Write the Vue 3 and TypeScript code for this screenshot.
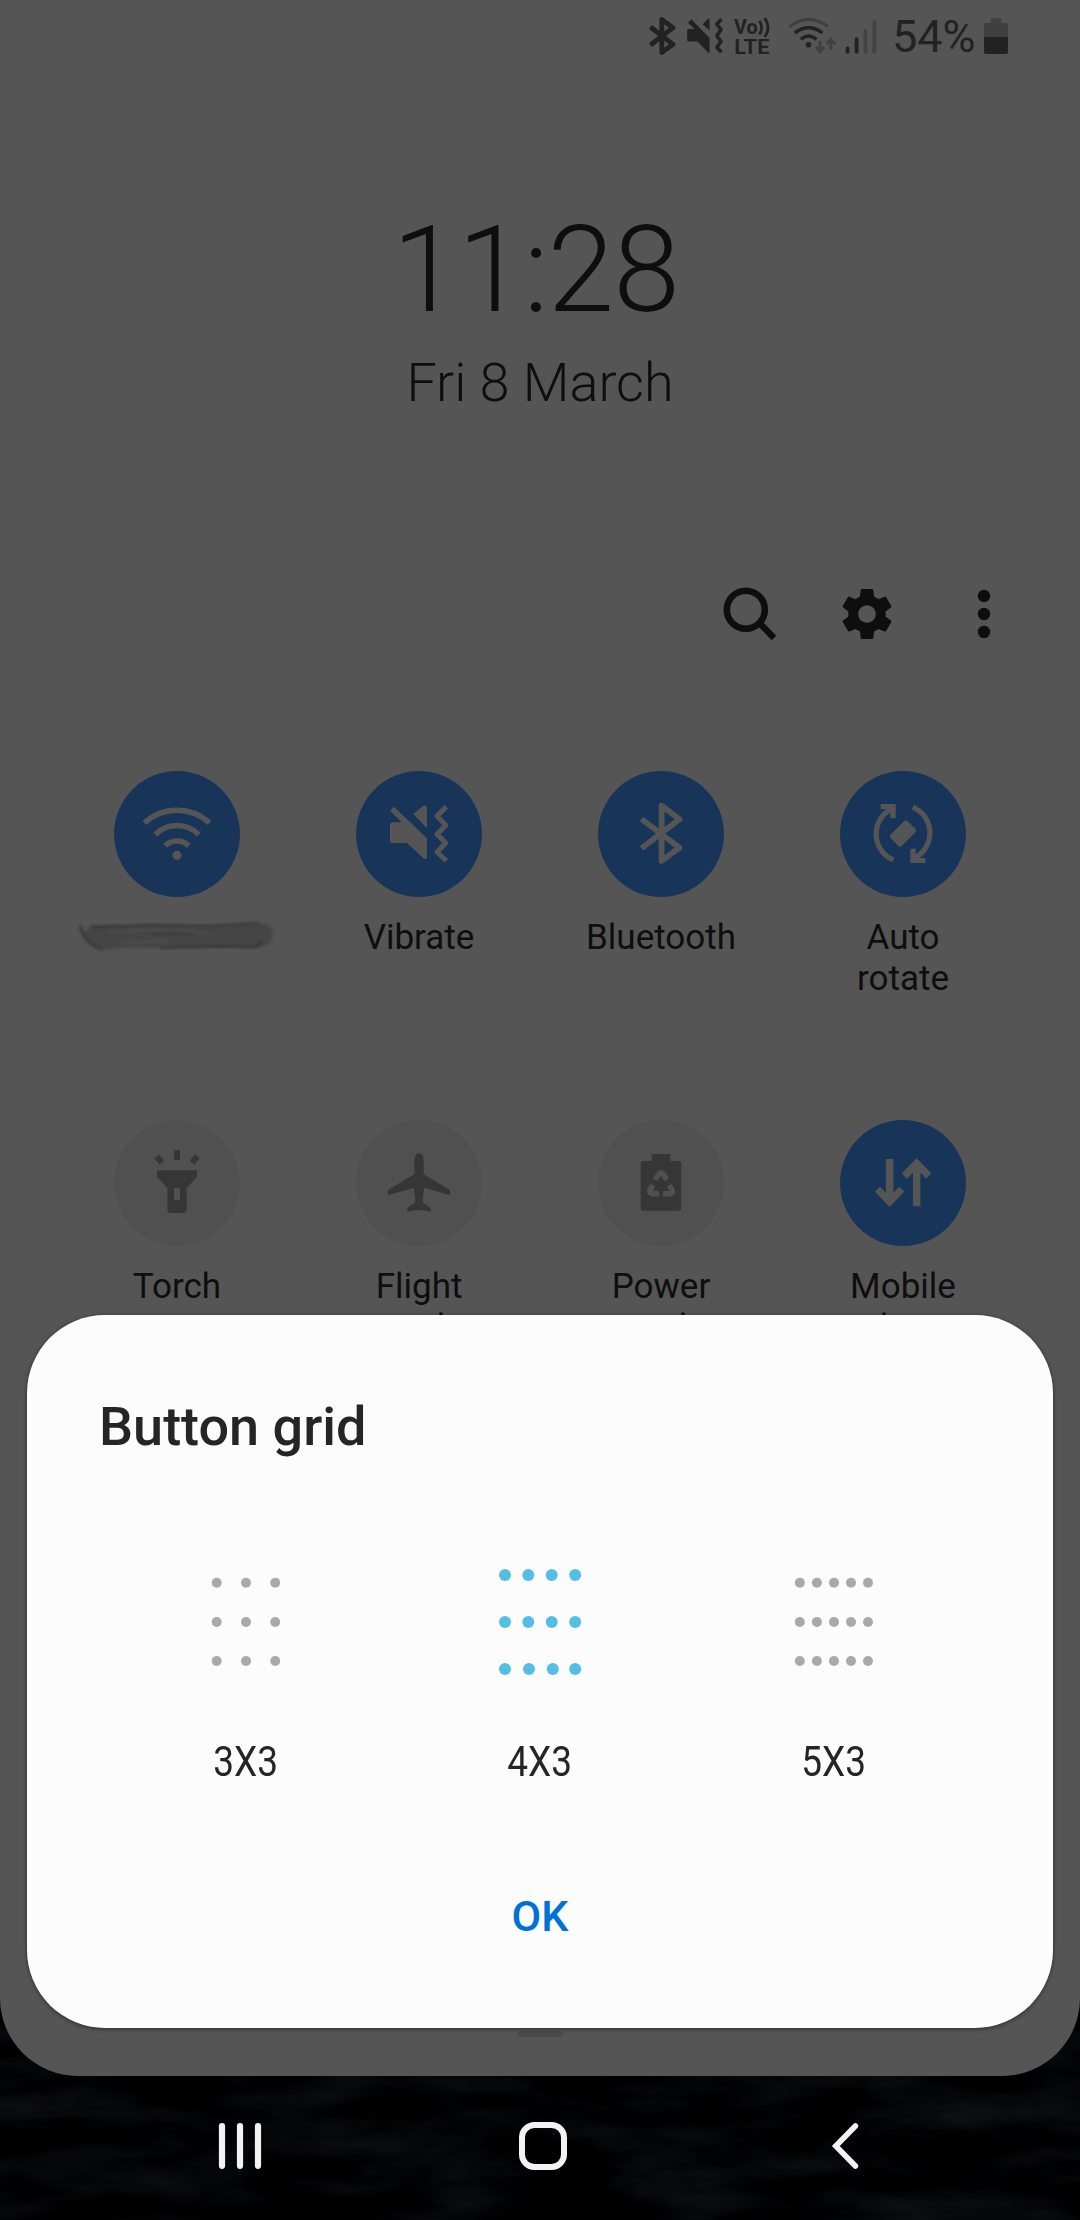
<script setup lang="ts">
interface Tile {
  name: string
  icon: string
  on: boolean
}

interface GridOption {
  label: string
  radius: number
  rows: { y: number; xs: number[] }[]
  selected: boolean
}

const tiles: Tile[] = [
  { name: '', icon: 'wifi', on: true },
  { name: 'Vibrate', icon: 'vibrate', on: true },
  { name: 'Bluetooth', icon: 'bluetooth', on: true },
  { name: 'Auto rotate', icon: 'rotate', on: true },
  { name: 'Torch', icon: 'torch', on: false },
  { name: 'Flight mode', icon: 'flight', on: false },
  { name: 'Power mode', icon: 'power', on: false },
  { name: 'Mobile data', icon: 'data', on: true },
]

const rowsOf = (ys: number[], xs: number[]) => ys.map((y) => ({ y, xs }))

const options: GridOption[] = [
  { label: '3X3', radius: 5, selected: false, rows: rowsOf([10.8, 50, 89], [20.7, 50, 79.2]) },
  {
    label: '4X3',
    radius: 6,
    selected: true,
    rows: [
      ...rowsOf([3, 50], [15, 38.3, 61.7, 85.2]),
      { y: 97, xs: [15, 39, 62.8, 85.2] },
    ],
  },
  { label: '5X3', radius: 5, selected: false, rows: rowsOf([10.8, 50, 89], [15.8, 32.9, 50, 67, 84]) },
]
</script>

<template>
  <div class="screen">
    <svg class="wallpaper" viewBox="0 0 1080 260" aria-hidden="true">
      <defs>
        <filter id="rock" x="0" y="0" width="100%" height="100%" color-interpolation-filters="sRGB">
          <feTurbulence type="fractalNoise" baseFrequency="0.008 0.03" numOctaves="5" seed="8" />
          <feColorMatrix values="0.13 0 0 0 -0.055  0.13 0 0 0 -0.053  0.13 0 0 0 -0.047  0 0 0 0 1" />
        </filter>
      </defs>
      <rect width="1080" height="260" filter="url(#rock)" />
    </svg>

    <main class="panel">
      <header class="status">
        <svg viewBox="645 0 34 72" width="34" height="72">
          <path d="M650.5 27L673 44.3L661.8 52.5V19.5L673 27.7L650.5 45" fill="none" stroke="#222" stroke-width="4.8" stroke-linejoin="round" />
        </svg>
        <svg viewBox="679 0 51 72" width="51" height="72">
          <path d="M688.5 29H694.5L688 22.7L691.3 19.3L709.6 38V52Q709.3 53.3 708 52.6L697.5 41.5H688.5Q687.2 41.5 687.2 40V30.5Q687.2 29 688.5 29ZM702.7 24.2L708 18.8Q709.4 18 709.6 19.5V30.5Z" fill="#222" />
          <path d="M721.5 19.2L716.8 24L721 29.8L716.8 35.7L721 41.5L716.8 47.2L721.5 52.3" fill="none" stroke="#222" stroke-width="3.6" stroke-linejoin="round" />
        </svg>
        <svg viewBox="730 0 54 72" width="54" height="72">
          <g fill="#222" font-family="Roboto, sans-serif" font-weight="700">
            <text x="734" y="33.6" font-size="20.5" textLength="23.5" lengthAdjust="spacingAndGlyphs">Vo</text>
            <text x="734.2" y="53.6" font-size="21" textLength="35.3" lengthAdjust="spacingAndGlyphs">LTE</text>
          </g>
          <path d="M759.4 21Q763.8 27.5 759.4 34.6M764.5 18Q771.7 27.4 764.5 37" fill="none" stroke="#222" stroke-width="2.6" />
        </svg>
        <svg viewBox="784 0 56 72" width="56" height="72" fill="none">
          <path d="M789.4 26.8Q808.8 12 828.2 26.8" stroke="#404040" stroke-width="3.2" />
          <path d="M794.8 32.8Q808.6 22.6 822.4 32.8M800.7 39.2Q808.6 32.8 816.5 39.2" stroke="#222" stroke-width="3.4" />
          <circle cx="808.5" cy="44.8" r="2.8" fill="#222" />
          <path d="M820 41V51.5M815.7 47L820 51.5L824.3 47M830.8 50V39.5M826.5 44L830.8 39.5L835.1 44" stroke="#404040" stroke-width="3" />
        </svg>
        <svg viewBox="840 0 52 72" width="52" height="72" stroke-width="3.8" stroke-linecap="round">
          <path d="M847.6 48.3V51.8M856.6 39.2V51.8" stroke="#222" />
          <path d="M865.4 30.4V51.8M874.4 22V51.8" stroke="#434343" />
        </svg>
        <span class="percent">54%</span>
        <svg viewBox="980 0 32 72" width="32" height="72">
          <path d="M991 18.2H1001.4V23H1006.5Q1008 23 1008 24.5V37H984V24.5Q984 23 985.5 23H991Z" fill="#404040" />
          <path d="M984 37H1008V52Q1008 54 1006 54H986Q984 54 984 52Z" fill="#222" />
        </svg>
      </header>

      <div class="clock">11:28</div>
      <div class="date">Fri 8 March</div>

      <div class="tools">
        <svg viewBox="718 584 60 60" width="60" height="60" fill="none" stroke="#0e0e0e">
          <circle cx="745.8" cy="609.7" r="19" stroke-width="6.6" />
          <path d="M759.5 623L774 638" stroke-width="6.4" />
        </svg>
        <svg class="gear" viewBox="0 0 24 24" width="60" height="60" fill="#0e0e0e">
          <path d="M19.43 12.98c.04-.32.07-.64.07-.98s-.03-.66-.07-.98l2.11-1.65c.19-.15.24-.42.12-.64l-2-3.46c-.12-.22-.39-.3-.61-.22l-2.49 1c-.52-.4-1.08-.73-1.69-.98l-.38-2.65C14.46 2.18 14.25 2 14 2h-4c-.25 0-.46.18-.49.42l-.38 2.65c-.61.25-1.17.59-1.69.98l-2.49-1c-.23-.09-.49 0-.61.22l-2 3.46c-.13.22-.07.49.12.64l2.11 1.65c-.04.32-.07.65-.07.98s.03.66.07.98l-2.11 1.65c-.19.15-.24.42-.12.64l2 3.46c.12.22.39.3.61.22l2.49-1c.52.4 1.08.73 1.69.98l.38 2.65c.03.24.24.42.49.42h4c.25 0 .46-.18.49-.42l.38-2.65c.61-.25 1.17-.59 1.69-.98l2.49 1c.23.09.49 0 .61-.22l2-3.46c.12-.22.07-.49-.12-.64l-2.11-1.65zM12 15.5c-1.93 0-3.5-1.57-3.5-3.5s1.57-3.5 3.5-3.5 3.5 1.57 3.5 3.5-1.57 3.5-3.5 3.5z" />
        </svg>
        <svg viewBox="954 584 60 60" width="60" height="60" fill="#0e0e0e">
          <circle cx="984" cy="596" r="6.2" />
          <circle cx="984" cy="614" r="6.2" />
          <circle cx="984" cy="632" r="6.2" />
        </svg>
      </div>

      <section class="tiles">
        <div v-for="tile in tiles" :key="tile.icon" class="tile" :class="{ on: tile.on }">
          <svg class="disc" viewBox="0 0 126 126">
            <g v-if="tile.icon === 'wifi'" class="line" stroke-width="5.6">
              <path d="M30.5 52A48 48 0 0 1 95.5 52M41.2 63.6A30.5 30.5 0 0 1 84.8 63.6M51.2 74.8A17 17 0 0 1 74.8 74.8" />
              <circle class="solid" cx="63" cy="84.3" r="4.5" />
            </g>
            <g v-else-if="tile.icon === 'vibrate'">
              <path class="solid" d="M36.5 51.3H45.7L34 39.7L37.8 35.7L71 67.3V86.5Q70.5 89 68 87.8L51 72H36.5Q34 72 34 69.5V53.8Q34 51.3 36.5 51.3ZM57.3 43L67.5 34.8Q70.7 33.8 71 36.5V57Z" />
              <path class="line" stroke-width="5" stroke-linejoin="round" d="M90.3 35.8L81 45L89.8 54.2L81 63.2L89.8 72L81 81L90.3 89.8" />
            </g>
            <path v-else-if="tile.icon === 'bluetooth'" class="line" stroke-width="5.8" stroke-linejoin="round" d="M43.5 48L81.5 76.7L63.6 90V34.7L81.5 48.3L43.5 77.3" />
            <g v-else-if="tile.icon === 'rotate'">
              <path class="line" stroke-width="5.2" d="M53.3 88.8A28 28 0 0 1 50.5 38.5M72.7 36.2A28 28 0 0 1 75.5 86.5" />
              <path class="solid" d="M40.7 32.9H55.7V47.2H50.2V42L46 38.1H40.7ZM85.3 92.1H70.3V77.8H75.8V83L80 86.9H85.3Z" />
              <rect class="solid" x="51" y="54.6" width="24" height="15.8" rx="2.2" transform="rotate(-45 63 62.5)" />
            </g>
            <g v-else-if="tile.icon === 'torch'">
              <path class="line" stroke-width="6" d="M63 30V40M42.8 36.2L47.8 42.8M83.2 36.2L78.2 42.8" />
              <path class="solid" fill-rule="evenodd" d="M43 50.2H83V56.7L72.8 68V89Q72.8 93 68.8 93H57.4Q53.4 93 53.4 89V68L43 56.7ZM60 68V80H66V68Z" />
            </g>
            <path v-else-if="tile.icon === 'flight'" class="solid" d="M63 33C66 33 67.7 37 67.7 41V54.3L92.4 69C94.3 70.2 94.3 72 94 75.3L68 67.7L66.5 82L73.8 87.5C75 88.7 75 90 74.6 91.8Q63 88.4 51.4 91.8C51 90 51 88.7 52.2 87.5L59.5 82L58 67.7L32 75.3C31.7 72 31.7 70.2 33.6 69L58.3 54.3V41C58.3 37 60 33 63 33Z" />
            <g v-else-if="tile.icon === 'power'">
              <path class="solid" d="M53.8 34H72.2V41H80.3Q83.3 41 83.3 44V87.7Q83.3 90.7 80.3 90.7H45.7Q42.7 90.7 42.7 87.7V44Q42.7 41 45.7 41H53.8Z" />
              <path class="arrows" d="M57.3 59.8L60.6 54.2Q63 51.2 65.4 54.2L68.7 59.8M54.8 65.2L51.9 70.2Q50.8 73.5 54.5 73.8H61M71.2 65.2L74.1 70.2Q75.2 73.5 71.5 73.8H65" />
            </g>
            <path v-else class="solid" d="M45.8 39H53.4V72.7L59.3 66.8L64.4 71.6L49.6 87L34.9 71.6L40 66.8L45.8 72.7ZM72.9 86.2H80.4V52.7L86.2 58.7L91.2 53.3L76.6 38.2L61.9 53.3L66.9 58.7L72.9 52.7Z" />
          </svg>
          <span v-if="tile.name" class="name">{{ tile.name }}</span>
          <svg v-else class="smudge" viewBox="72 915 210 44" width="210" height="44">
            <defs>
              <filter id="soft" x="-10%" y="-40%" width="120%" height="180%"><feGaussianBlur stdDeviation="1.8" /></filter>
              <filter id="fine" x="-10%" y="-80%" width="120%" height="260%"><feGaussianBlur stdDeviation="0.8" /></filter>
            </defs>
            <path d="M79 925Q83 945 101 950L122 948H258Q273 946 273 932Q271 922 255 923L220 925H92Q84 929 89 935Z" fill="#454545" filter="url(#soft)" />
            <g fill="none" filter="url(#fine)" stroke-width="1.6">
              <path d="M92 927L150 925L210 926L258 923" stroke="#343434" />
              <path d="M80 926Q86 944 102 949" stroke="#3e3e3e" stroke-width="3" />
              <path d="M110 932Q160 928 210 933M120 943L170 941" stroke="#4c4c4c" stroke-width="3" />
              <path d="M152 934Q178 931 194 935" stroke="#363636" />
              <path d="M160 948L220 946L256 947L262 941" stroke="#333" />
            </g>
          </svg>
        </div>
      </section>
      <div class="handle"></div>
    </main>

    <nav class="nav">
      <svg viewBox="205 2110 72 72" width="72" height="72" stroke="#f3f3f3" stroke-width="6.2" stroke-linecap="round">
        <path d="M222 2126.2V2165.8M240 2126.2V2165.8M258 2126.2V2165.8" />
      </svg>
      <svg viewBox="506 2110 72 72" width="72" height="72" fill="none" stroke="#f3f3f3" stroke-width="6">
        <rect x="521" y="2125" width="42" height="42" rx="12.5" />
      </svg>
      <svg viewBox="808 2110 72 72" width="72" height="72" fill="none" stroke="#f3f3f3" stroke-width="5.6" stroke-linecap="round">
        <path d="M854.4 2126L834.8 2146L854.4 2166" />
      </svg>
    </nav>

    <section class="dialog" role="dialog">
      <h1>Button grid</h1>
      <div class="options">
        <div v-for="option in options" :key="option.label" class="option" :class="{ selected: option.selected }">
          <svg class="dots" viewBox="0 -5 100 110" width="100" height="110">
            <template v-for="row in option.rows" :key="row.y">
              <circle v-for="x in row.xs" :key="x" :cx="x" :cy="row.y" :r="option.radius" />
            </template>
          </svg>
          <span>{{ option.label }}</span>
        </div>
      </div>
      <button type="button">OK</button>
    </section>
  </div>
</template>

<style>
body {
  background: #000;
}
</style>

<style scoped>
.screen {
  position: relative;
  width: 1080px;
  height: 2220px;
  overflow: hidden;
  background: #000;
  font-family: Roboto, "Liberation Sans", sans-serif;
}
svg {
  display: block;
  flex: none;
}
.wallpaper {
  position: absolute;
  left: 0;
  bottom: 0;
  width: 1080px;
  height: 260px;
}
.panel {
  position: relative;
  box-sizing: border-box;
  display: flex;
  flex-direction: column;
  height: 2076px;
  overflow: hidden;
  border-radius: 0 0 78px 78px;
  background: #555;
  color: #0e0e0e;
}
.status {
  display: flex;
  justify-content: flex-end;
  height: 72px;
  padding-right: 68px;
}
.percent {
  width: 88px;
  font-size: 45px;
  line-height: 74px;
  color: #222;
}
.clock {
  margin-top: 138px;
  padding-right: 9px;
  text-align: center;
  font-size: 120px;
  font-weight: 300;
  letter-spacing: -1px;
  line-height: 120px;
}
.date {
  margin-top: 21px;
  text-align: center;
  font-size: 54px;
  font-weight: 300;
  line-height: 64px;
}
.tools {
  display: flex;
  justify-content: flex-end;
  gap: 57px;
  margin-top: 169px;
  padding-right: 66px;
}
.gear {
  margin-left: 2px;
}
.tiles {
  display: grid;
  grid-template-columns: repeat(4, 242px);
  grid-auto-rows: 349px;
  margin: 127px 56px 0;
}
.tile {
  display: flex;
  flex-direction: column;
  align-items: center;
}
.disc {
  width: 126px;
  height: 126px;
  border-radius: 50%;
  background: #505050;
  color: #363636;
}
.on .disc {
  background: #183559;
  color: #555;
}
.solid {
  fill: currentColor;
  stroke: none;
}
.line {
  fill: none;
  stroke: currentColor;
}
.arrows {
  fill: none;
  stroke: #505050;
  stroke-width: 5.4;
}
.name {
  width: 150px;
  margin-top: 20px;
  text-align: center;
  font-size: 35px;
  line-height: 41px;
}
.smudge {
  margin-top: 18px;
}
.handle {
  width: 45px;
  height: 6px;
  margin: 562px auto 0;
  border-radius: 3px;
  background: #484848;
}
.nav {
  position: relative;
  display: flex;
  gap: 230px;
  height: 110px;
  padding: 34px 0 0 205px;
}
.dialog {
  position: absolute;
  left: 27px;
  top: 1315px;
  box-sizing: border-box;
  display: flex;
  flex-direction: column;
  width: 1026px;
  height: 713px;
  padding: 80px 72px 0;
  border-radius: 78px;
  background: #fcfcfc;
  box-shadow: 0 1px 4px rgba(0, 0, 0, 0.5);
  color: #252525;
}
h1 {
  margin: 0;
  font-size: 54px;
  font-weight: 500;
  line-height: 64px;
}
.options {
  display: grid;
  grid-template-columns: repeat(3, 294px);
  margin-top: 108px;
}
.option {
  display: flex;
  flex-direction: column;
  align-items: center;
}
.dots {
  fill: #a5abab;
}
.selected .dots {
  fill: #56bee5;
}
.option span {
  margin-top: 59px;
  font-size: 43px;
  line-height: 50px;
  transform: scaleX(0.86);
}
button {
  align-self: center;
  margin-top: 105px;
  padding: 0;
  border: 0;
  background: none;
  color: #0072d5;
  font: 500 43px/50px Roboto, "Liberation Sans", sans-serif;
}
</style>
